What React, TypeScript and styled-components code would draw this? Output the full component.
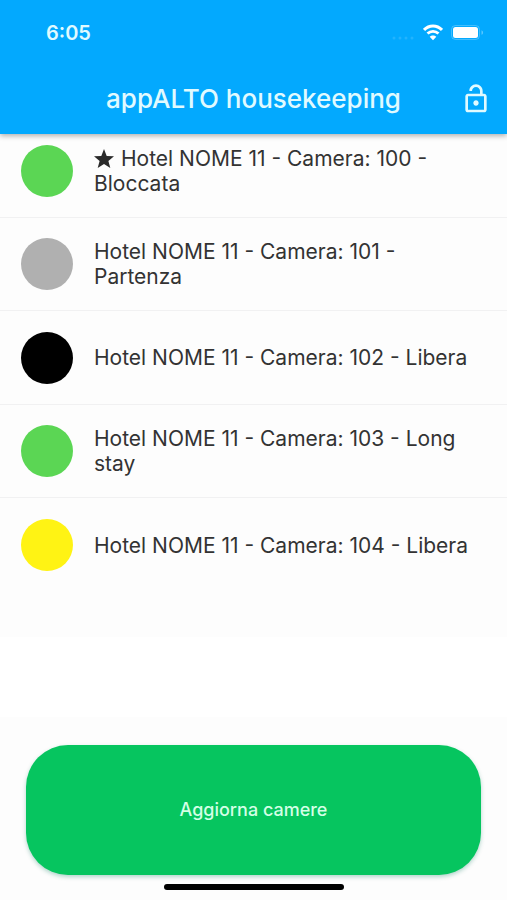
import React from "react";
import styled, { createGlobalStyle } from "styled-components";
import { MdOutlineLockOpen } from "react-icons/md";

const Global = createGlobalStyle`
  *, *::before, *::after { box-sizing: border-box; }
  body { margin: 0; background: #fdfdfd; color: #333333; font-family: Inter, sans-serif; }
`;

const Screen = styled.div`
  min-height: 100vh;
  display: flex;
  flex-direction: column;
`;

const Header = styled.header`
  background: #03a9fe;
  color: #e0faff;
  box-shadow: 0 2px 5px rgba(0, 0, 0, 0.3);
`;

const StatusBar = styled.div`
  height: 64px;
  padding: 2px 23px 0 46px;
  display: flex;
  align-items: center;
  justify-content: space-between;
`;

const Clock = styled.time`
  font-size: 20px;
  font-weight: 600;
  line-height: 24px;
`;

const Indicators = styled.div`
  display: flex;
  align-items: center;
  gap: 8px;
`;

const TitleBar = styled.div`
  height: 70px;
  display: grid;
  grid-template-columns: 62px 1fr 62px;
  align-items: center;
`;

const Title = styled.h1`
  grid-column: 2;
  margin: 0;
  text-align: center;
  font-size: 26px;
  font-weight: 500;
  line-height: 32px;
`;

const IconButton = styled.button`
  justify-self: center;
  padding: 0;
  border: 0;
  background: none;
  color: inherit;
  display: flex;
`;

const RoomList = styled.ul`
  flex: 1;
  margin: 0;
  padding: 0;
  list-style: none;
`;

const Room = styled.li`
  min-height: 94px;
  padding: 0 32px 0 21px;
  display: flex;
  align-items: center;
  gap: 21px;
  border-bottom: 1px solid #f1f1f2;
  &:nth-child(even) { min-height: 93px; }
  &:first-child { min-height: 84px; padding-bottom: 10px; }
  &:last-child { border-bottom: 0; }
`;

const Dot = styled.span<{ $color: string }>`
  flex: none;
  width: 52px;
  height: 52px;
  border-radius: 50%;
  background: ${(p) => p.$color};
`;

const RoomName = styled.span`
  font-size: 21px;
  line-height: 25px;
`;

const Star = styled.svg`
  width: 20px;
  height: 20px;
  margin-right: 7px;
  vertical-align: -3px;
  fill: #2a2a2a;
`;

const Blank = styled.div`
  height: 80px;
  background: #fff;
`;

const Footer = styled.footer`
  padding: 28px 26px 10px;
  display: flex;
  flex-direction: column;
  align-items: center;
  gap: 9px;
`;

const RefreshButton = styled.button`
  width: 100%;
  height: 130px;
  border: 0;
  border-radius: 42px;
  background: #06c55f;
  color: #d4ffe6;
  font: 500 18px/24px Inter, sans-serif;
  box-shadow: 0 2px 4px rgba(0, 120, 90, 0.3);
`;

const HomeIndicator = styled.div`
  width: 180px;
  height: 6px;
  border-radius: 3px;
  background: #000;
`;

const SignalIcon = () => (
  <svg width="24" height="18" viewBox="0 0 24 18" fill="#fff" opacity="0.12" aria-hidden="true">
    <circle cx="3" cy="14" r="1.5" />
    <circle cx="9" cy="14" r="1.5" />
    <circle cx="15" cy="14" r="1.5" />
    <circle cx="21" cy="14" r="1.5" />
  </svg>
);

const WifiIcon = () => (
  <svg width="20" height="18" viewBox="0 0 20 18" fill="none" stroke="#fff" aria-hidden="true">
    <path d="M1 6C6 0.6 14 0.6 19 6" strokeWidth="3" />
    <path d="M4.5 9.6C7.6 6.5 12.4 6.5 15.5 9.6" strokeWidth="2.8" />
    <path d="M10 16.2L6.7 12.8C8.5 11 11.5 11 13.3 12.8Z" fill="#fff" stroke="none" />
  </svg>
);

const BatteryIcon = () => (
  <svg width="33" height="18" viewBox="0 0 33 18" aria-hidden="true">
    <rect x="0.5" y="1.5" width="28" height="14" rx="4" fill="none" stroke="#fff" strokeOpacity="0.25" />
    <rect x="2" y="3" width="25" height="11" rx="2.5" fill="#fff" />
    <path d="M30.5 6.2C32.6 7 32.6 10 30.5 10.8Z" fill="#fff" fillOpacity="0.35" />
  </svg>
);

const StarIcon = () => (
  <Star viewBox="0 0 20 20" aria-hidden="true">
    <path d="M10 0L12.7 6.9L20 7.3L14.4 12L16.3 19L10 15.1L3.7 19L5.6 12L0 7.3L7.3 6.9Z" />
  </Star>
);

const rooms = [
  { color: "#5bd654", name: "Hotel NOME 11 - Camera: 100 - Bloccata", starred: true },
  { color: "#b0b0b0", name: "Hotel NOME 11 - Camera: 101 - Partenza" },
  { color: "#000000", name: "Hotel NOME 11 - Camera: 102 - Libera" },
  { color: "#5bd654", name: "Hotel NOME 11 - Camera: 103 - Long stay" },
  { color: "#fff314", name: "Hotel NOME 11 - Camera: 104 - Libera" },
];

export default function App() {
  return (
    <Screen>
      <Global />
      <Header>
        <StatusBar>
          <Clock>6:05</Clock>
          <Indicators>
            <SignalIcon />
            <WifiIcon />
            <BatteryIcon />
          </Indicators>
        </StatusBar>
        <TitleBar>
          <Title>appALTO housekeeping</Title>
          <IconButton type="button" aria-label="Sblocca">
            <MdOutlineLockOpen size={32} />
          </IconButton>
        </TitleBar>
      </Header>
      <RoomList>
        {rooms.map((room) => (
          <Room key={room.name}>
            <Dot $color={room.color} />
            <RoomName>
              {room.starred && <StarIcon />}
              {room.name}
            </RoomName>
          </Room>
        ))}
      </RoomList>
      <Blank />
      <Footer>
        <RefreshButton type="button">Aggiorna camere</RefreshButton>
        <HomeIndicator />
      </Footer>
    </Screen>
  );
}
